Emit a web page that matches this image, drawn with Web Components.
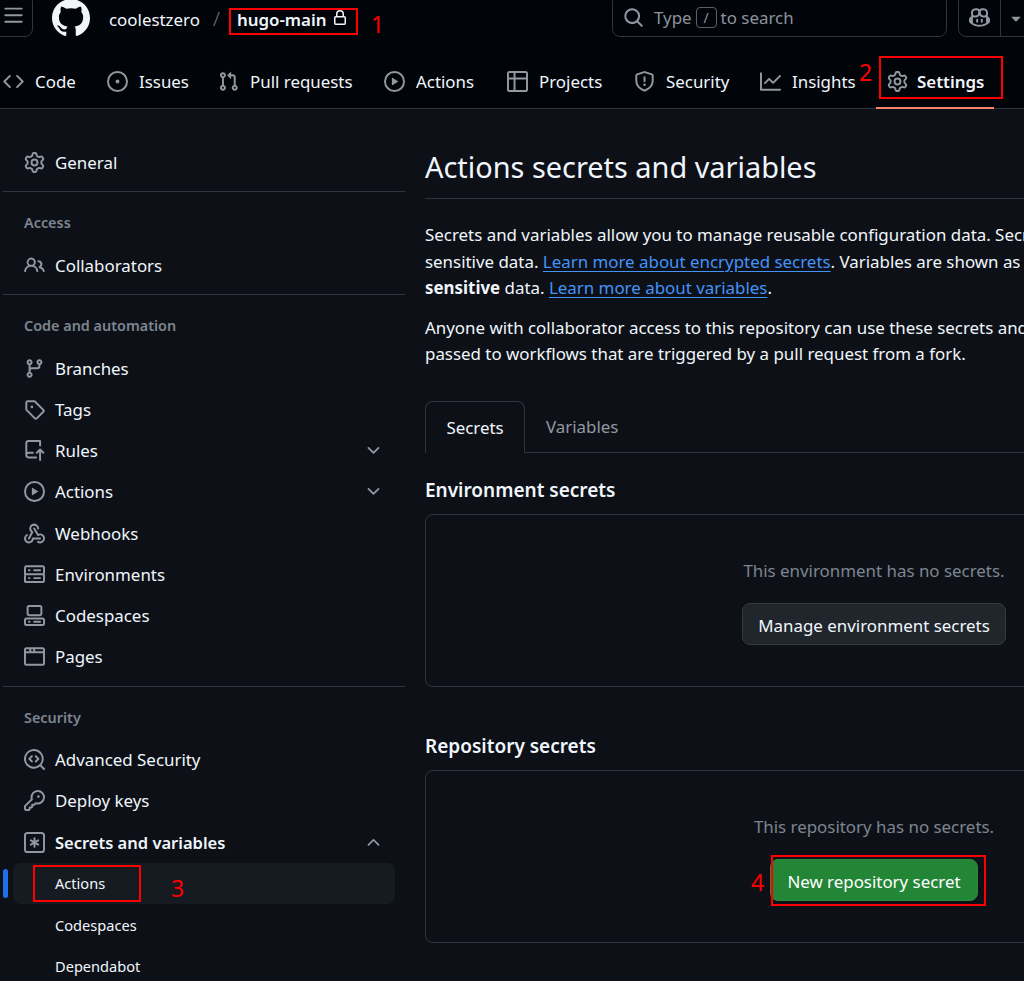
<!DOCTYPE html>
<html lang="en">

<head>
  <meta charset="UTF-8">
  <title>Actions secrets and variables</title>
  <style>
    html,
    body {
      margin: 0;
      height: 100%;
      overflow: hidden;
      background-color: #0d1117;
      color: #f0f6fc;
      font-family: "Noto Sans", "Liberation Sans", sans-serif;
      font-size: 16.9px;
    }

    body {
      position: relative;
    }

    /* 定义前隐藏组件 */
    :not(:defined) {
      display: none;
    }
  </style>
</head>

<body>
  <gh-header>
    <top-bar owner="coolestzero" repo="hugo-main"></top-bar>
    <repo-nav>
      <nav-tab icon="code" style="--w:41px">Code</nav-tab>
      <nav-tab icon="issue" style="--w:48px">Issues</nav-tab>
      <nav-tab icon="pr" style="--w:103px">Pull requests</nav-tab>
      <nav-tab icon="play" style="--w:60px">Actions</nav-tab>
      <nav-tab icon="table" style="--w:64px">Projects</nav-tab>
      <nav-tab icon="shield" style="--w:63px">Security</nav-tab>
      <nav-tab icon="graph" style="--w:64px">Insights</nav-tab>
      <nav-tab icon="gear" style="--w:68px" selected>Settings</nav-tab>
    </repo-nav>
  </gh-header>

  <settings-layout>
    <settings-side slot="side">
      <side-item icon="gear">General</side-item>
      <side-group label="Access">
        <side-item icon="people">Collaborators</side-item>
      </side-group>
      <side-group label="Code and automation">
        <side-item icon="branch">Branches</side-item>
        <side-item icon="tag">Tags</side-item>
        <side-item icon="rules" chevron="down">Rules</side-item>
        <side-item icon="play" chevron="down">Actions</side-item>
        <side-item icon="webhook">Webhooks</side-item>
        <side-item icon="server">Environments</side-item>
        <side-item icon="codespaces">Codespaces</side-item>
        <side-item icon="browser">Pages</side-item>
      </side-group>
      <side-group label="Security" last>
        <side-item icon="codescan">Advanced Security</side-item>
        <side-item icon="key">Deploy keys</side-item>
        <side-item icon="asterisk" chevron="up" strong>Secrets and variables</side-item>
        <side-item sub current>Actions</side-item>
        <side-item sub>Codespaces</side-item>
        <side-item sub>Dependabot</side-item>
      </side-group>
    </settings-side>

    <secrets-page>
      <secret-box title-text="Environment secrets" empty="This environment has no secrets.">
        <action-button>Manage environment secrets</action-button>
      </secret-box>
      <secret-box title-text="Repository secrets" empty="This repository has no secrets.">
        <action-button primary>New repository secret</action-button>
      </secret-box>
    </secrets-page>
  </settings-layout>

  <!-- 红色标注 -->
  <red-mark num="1" style="left:229px;top:8px;width:129px;height:27px;--nx:140px;--ny:0px"></red-mark>
  <red-mark num="2" style="left:879px;top:56px;width:124px;height:43px;--nx:-22px;--ny:0px"></red-mark>
  <red-mark num="3" style="left:33px;top:865px;width:108px;height:37px;--nx:136px;--ny:7px"></red-mark>
  <red-mark num="4" style="left:771px;top:855px;width:215px;height:51px;--nx:-22px;--ny:11px"></red-mark>

  <script>
    (function () {
      const ICONS = {
        bars: 'M1 2.75A.75.75 0 0 1 1.75 2h12.5a.75.75 0 0 1 0 1.5H1.75A.75.75 0 0 1 1 2.75Zm0 5A.75.75 0 0 1 1.75 7h12.5a.75.75 0 0 1 0 1.5H1.75A.75.75 0 0 1 1 7.75ZM1.75 12h12.5a.75.75 0 0 1 0 1.5H1.75a.75.75 0 0 1 0-1.5Z',
        github: 'M8 0c4.42 0 8 3.58 8 8a8.013 8.013 0 0 1-5.45 7.59c-.4.08-.55-.17-.55-.38 0-.27.01-1.13.01-2.2 0-.75-.25-1.23-.54-1.48 1.78-.2 3.65-.88 3.65-3.95 0-.88-.31-1.59-.82-2.15.08-.2.36-1.02-.08-2.12 0 0-.67-.22-2.2.82-.64-.18-1.32-.27-2-.27-.68 0-1.36.09-2 .27-1.53-1.03-2.2-.82-2.2-.82-.44 1.1-.16 1.92-.08 2.12-.51.56-.82 1.28-.82 2.15 0 3.06 1.86 3.75 3.64 3.95-.23.2-.44.55-.51 1.07-.46.21-1.61.55-2.33-.66-.15-.24-.6-.83-1.23-.82-.67.01-.27.38.01.53.34.19.73.9.82 1.13.16.45.68 1.31 2.69.94 0 .67.01 1.3.01 1.49 0 .21-.15.45-.55.38A7.995 7.995 0 0 1 0 8c0-4.42 3.58-8 8-8Z',
        lock: 'M4 4a4 4 0 0 1 8 0v2h.25c.966 0 1.75.784 1.75 1.75v5.5A1.75 1.75 0 0 1 12.25 15h-8.5A1.75 1.75 0 0 1 2 13.25v-5.5C2 6.784 2.784 6 3.75 6H4Zm8.25 3.5h-8.5a.25.25 0 0 0-.25.25v5.5c0 .138.112.25.25.25h8.5a.25.25 0 0 0 .25-.25v-5.5a.25.25 0 0 0-.25-.25ZM10.5 6V4a2.5 2.5 0 1 0-5 0v2Z',
        search: 'M10.68 11.74a6 6 0 0 1-7.922-8.982 6 6 0 0 1 8.982 7.922l3.04 3.04a.749.749 0 0 1-.326 1.275.749.749 0 0 1-.734-.215ZM11.5 7a4.499 4.499 0 1 0-8.997 0A4.499 4.499 0 0 0 11.5 7Z',
        copilot: 'M7.998 15.035c-4.562 0-7.873-2.914-7.998-3.749V9.338c.085-.628.677-1.686 1.588-2.065.013-.07.024-.143.036-.218.029-.183.06-.384.126-.612-.201-.508-.254-1.084-.254-1.656 0-.87.128-1.769.693-2.484.579-.733 1.494-1.124 2.724-1.261 1.206-.134 2.262.034 2.944.765.05.053.096.108.139.165.044-.057.094-.112.143-.165.682-.731 1.738-.899 2.944-.765 1.23.137 2.145.528 2.724 1.261.566.715.693 1.614.693 2.484 0 .572-.053 1.148-.254 1.656.066.228.098.429.126.612.012.076.024.148.037.218.924.385 1.522 1.471 1.591 2.095v1.872c0 .766-3.351 3.795-8.002 3.795Zm0-1.485c2.28 0 4.584-1.11 5.002-1.433V7.862l-.023-.116c-.49.21-1.075.291-1.727.291-1.146 0-2.059-.327-2.71-.991A3.222 3.222 0 0 1 8 6.303a3.24 3.24 0 0 1-.544.743c-.65.664-1.563.991-2.71.991-.652 0-1.236-.081-1.727-.291l-.023.116v4.255c.419.323 2.722 1.433 5.002 1.433ZM6.762 2.83c-.193-.206-.637-.413-1.682-.297-1.019.113-1.479.404-1.713.7-.247.312-.369.789-.369 1.554 0 .793.129 1.171.308 1.371.162.181.519.379 1.442.379.853 0 1.339-.235 1.638-.54.315-.322.527-.827.617-1.553.117-.935-.037-1.395-.241-1.614Zm4.155-.297c-1.044-.116-1.488.091-1.681.297-.204.219-.359.679-.242 1.614.091.726.303 1.231.618 1.553.299.305.784.54 1.638.54.922 0 1.28-.198 1.442-.379.179-.2.308-.578.308-1.371 0-.765-.123-1.242-.37-1.554-.233-.296-.693-.587-1.713-.7ZM6.25 9.037a.75.75 0 0 1 .75.75v1.501a.75.75 0 0 1-1.5 0V9.787a.75.75 0 0 1 .75-.75Zm4.25.75v1.501a.75.75 0 0 1-1.5 0V9.787a.75.75 0 0 1 1.5 0Z',
        code: 'm11.28 3.22 4.25 4.25a.75.75 0 0 1 0 1.06l-4.25 4.25a.749.749 0 0 1-1.275-.326.749.749 0 0 1 .215-.734L13.94 8l-3.72-3.72a.749.749 0 0 1 .326-1.275.749.749 0 0 1 .734.215Zm-6.56 0a.751.751 0 0 1 1.042.018.751.751 0 0 1 .018 1.042L2.06 8l3.72 3.72a.749.749 0 0 1-.326 1.275.749.749 0 0 1-.734-.215L.47 8.53a.75.75 0 0 1 0-1.06Z',
        issue: 'M8 9.5a1.5 1.5 0 1 0 0-3 1.5 1.5 0 0 0 0 3ZM8 0a8 8 0 1 1 0 16A8 8 0 0 1 8 0ZM1.5 8a6.5 6.5 0 1 0 13 0 6.5 6.5 0 0 0-13 0Z',
        pr: 'M1.5 3.25a2.25 2.25 0 1 1 3 2.122v5.256a2.251 2.251 0 1 1-1.5 0V5.372A2.25 2.25 0 0 1 1.5 3.25Zm5.677-.177L9.573.677A.25.25 0 0 1 10 .854V2.5h1A2.5 2.5 0 0 1 13.5 5v5.628a2.251 2.251 0 1 1-1.5 0V5a1 1 0 0 0-1-1h-1v1.646a.25.25 0 0 1-.427.177L7.177 3.427a.25.25 0 0 1 0-.354ZM3.75 2.5a.75.75 0 1 0 0 1.5.75.75 0 0 0 0-1.5Zm0 9.5a.75.75 0 1 0 0 1.5.75.75 0 0 0 0-1.5Zm8.25.75a.75.75 0 1 0 1.5 0 .75.75 0 0 0-1.5 0Z',
        play: 'M8 0a8 8 0 1 1 0 16A8 8 0 0 1 8 0ZM1.5 8a6.5 6.5 0 1 0 13 0 6.5 6.5 0 0 0-13 0Zm4.879-2.773 4.264 2.559a.25.25 0 0 1 0 .428l-4.264 2.559A.25.25 0 0 1 6 10.559V5.442a.25.25 0 0 1 .379-.215Z',
        table: 'M0 1.75C0 .784.784 0 1.75 0h12.5C15.216 0 16 .784 16 1.75v12.5A1.75 1.75 0 0 1 14.25 16H1.75A1.75 1.75 0 0 1 0 14.25ZM6.5 6.5v8h7.75a.25.25 0 0 0 .25-.25V6.5Zm8-1.5V1.75a.25.25 0 0 0-.25-.25H6.5V5Zm-13 1.5v7.75c0 .138.112.25.25.25H5v-8ZM5 5V1.5H1.75a.25.25 0 0 0-.25.25V5Z',
        shield: 'M7.467.133a1.748 1.748 0 0 1 1.066 0l5.25 1.68A1.75 1.75 0 0 1 15 3.48V7c0 1.566-.32 3.182-1.303 4.682-.983 1.498-2.585 2.813-5.032 3.855a1.697 1.697 0 0 1-1.33 0c-2.447-1.042-4.049-2.357-5.032-3.855C1.32 10.182 1 8.566 1 7V3.48a1.75 1.75 0 0 1 1.217-1.667Zm.61 1.429a.25.25 0 0 0-.153 0l-5.25 1.68a.25.25 0 0 0-.174.238V7c0 1.358.275 2.666 1.057 3.86.784 1.194 2.121 2.34 4.366 3.297a.196.196 0 0 0 .154 0c2.245-.956 3.582-2.104 4.366-3.298C13.225 9.666 13.5 8.36 13.5 7V3.48a.251.251 0 0 0-.174-.237l-5.25-1.68ZM8.75 4.75v3a.75.75 0 0 1-1.5 0v-3a.75.75 0 0 1 1.5 0ZM9 10.5a1 1 0 1 1-2 0 1 1 0 0 1 2 0Z',
        graph: 'M1.5 1.75V13.5h13.75a.75.75 0 0 1 0 1.5H.75a.75.75 0 0 1-.75-.75V1.75a.75.75 0 0 1 1.5 0Zm14.28 2.53-5.25 5.25a.75.75 0 0 1-1.06 0L7 7.06 4.28 9.78a.751.751 0 0 1-1.042-.018.751.751 0 0 1-.018-1.042l3.25-3.25a.75.75 0 0 1 1.06 0L10 7.94l4.72-4.72a.751.751 0 0 1 1.042.018.751.751 0 0 1 .018 1.042Z',
        gear: 'M8 0a8.2 8.2 0 0 1 .701.031C9.444.095 9.99.645 10.16 1.29l.288 1.107c.018.066.079.158.212.224.231.114.454.243.668.386.123.082.233.09.299.071l1.103-.303c.644-.176 1.392.021 1.82.63.27.385.506.792.704 1.218.315.675.111 1.422-.364 1.891l-.814.806c-.049.048-.098.147-.088.294.016.257.016.515 0 .772-.01.147.038.246.088.294l.814.806c.475.469.679 1.216.364 1.891a7.977 7.977 0 0 1-.704 1.217c-.428.61-1.176.807-1.82.63l-1.102-.302c-.067-.019-.177-.011-.3.071a5.909 5.909 0 0 1-.668.386c-.133.066-.194.158-.211.224l-.29 1.106c-.168.646-.715 1.196-1.458 1.26a8.006 8.006 0 0 1-1.402 0c-.743-.064-1.289-.614-1.458-1.26l-.289-1.106c-.018-.066-.079-.158-.212-.224a5.738 5.738 0 0 1-.668-.386c-.123-.082-.233-.09-.299-.071l-1.103.303c-.644.176-1.392-.021-1.82-.63a8.12 8.12 0 0 1-.704-1.218c-.315-.675-.111-1.422.363-1.891l.815-.806c.05-.048.098-.147.088-.294a6.214 6.214 0 0 1 0-.772c.01-.147-.038-.246-.088-.294l-.815-.806C.635 6.045.431 5.298.746 4.623a7.92 7.92 0 0 1 .704-1.217c.428-.61 1.176-.807 1.82-.63l1.102.302c.067.019.177.011.3-.071.214-.143.437-.272.668-.386.133-.066.194-.158.211-.224l.29-1.106C6.009.645 6.556.095 7.299.03 7.53.01 7.764 0 8 0Zm-.571 1.525c-.036.003-.108.036-.137.146l-.289 1.105c-.147.561-.549.967-.998 1.189-.173.086-.34.183-.5.29-.417.278-.97.423-1.529.27l-1.103-.303c-.109-.03-.175.016-.195.045-.22.312-.412.644-.573.99-.014.031-.021.11.059.19l.815.806c.411.406.562.957.53 1.456a4.709 4.709 0 0 0 0 .582c.032.499-.119 1.05-.53 1.456l-.815.806c-.081.08-.073.159-.059.19.162.346.353.677.573.989.02.03.085.076.195.046l1.102-.303c.56-.153 1.113-.008 1.53.27.161.107.328.204.501.29.447.222.85.629.997 1.189l.289 1.105c.029.109.101.143.137.146a6.6 6.6 0 0 0 1.142 0c.036-.003.108-.036.137-.146l.289-1.105c.147-.561.549-.967.998-1.189.173-.086.34-.183.5-.29.417-.278.97-.423 1.529-.27l1.103.303c.109.029.175-.016.195-.045.22-.313.411-.644.573-.99.014-.031.021-.11-.059-.19l-.815-.806c-.411-.406-.562-.957-.53-1.456a4.709 4.709 0 0 0 0-.582c-.032-.499.119-1.05.53-1.456l.815-.806c.081-.08.073-.159.059-.19a6.464 6.464 0 0 0-.573-.989c-.02-.03-.085-.076-.195-.046l-1.102.303c-.56.153-1.113.008-1.53-.27a4.44 4.44 0 0 0-.501-.29c-.447-.222-.85-.629-.997-1.189l-.289-1.105c-.029-.11-.101-.143-.137-.146a6.6 6.6 0 0 0-1.142 0ZM11 8a3 3 0 1 1-6 0 3 3 0 0 1 6 0ZM9.5 8a1.5 1.5 0 1 0-3.001.001A1.5 1.5 0 0 0 9.5 8Z',
        people: 'M2 5.5a3.5 3.5 0 1 1 5.898 2.549 5.508 5.508 0 0 1 3.034 4.084.75.75 0 1 1-1.482.235 4 4 0 0 0-7.9 0 .75.75 0 0 1-1.482-.236A5.507 5.507 0 0 1 3.102 8.05 3.493 3.493 0 0 1 2 5.5ZM11 4a3.001 3.001 0 0 1 2.22 5.018 5.01 5.01 0 0 1 2.56 3.012.749.749 0 0 1-.885.954.752.752 0 0 1-.549-.514 3.507 3.507 0 0 0-2.522-2.372.75.75 0 0 1-.574-.73v-.352a.75.75 0 0 1 .416-.672A1.5 1.5 0 0 0 11 5.5.75.75 0 0 1 11 4Zm-5.5-.5a2 2 0 1 0-.001 3.999A2 2 0 0 0 5.5 3.5Z',
        branch: 'M9.5 3.25a2.25 2.25 0 1 1 3 2.122V6A2.5 2.5 0 0 1 10 8.5H6a1 1 0 0 0-1 1v1.128a2.251 2.251 0 1 1-1.5 0V5.372a2.25 2.25 0 1 1 1.5 0v1.836A2.493 2.493 0 0 1 6 7h4a1 1 0 0 0 1-1v-.628A2.25 2.25 0 0 1 9.5 3.25Zm-6 0a.75.75 0 1 0 1.5 0 .75.75 0 0 0-1.5 0Zm8.25-.75a.75.75 0 1 0 0 1.5.75.75 0 0 0 0-1.5ZM4.25 12a.75.75 0 1 0 0 1.5.75.75 0 0 0 0-1.5Z',
        tag: 'M1 7.775V2.75C1 1.784 1.784 1 2.75 1h5.025c.464 0 .91.184 1.238.513l6.25 6.25a1.75 1.75 0 0 1 0 2.474l-5.026 5.026a1.75 1.75 0 0 1-2.474 0l-6.25-6.25A1.752 1.752 0 0 1 1 7.775Zm1.5 0c0 .066.026.13.073.177l6.25 6.25a.25.25 0 0 0 .354 0l5.025-5.025a.25.25 0 0 0 0-.354l-6.25-6.25a.25.25 0 0 0-.177-.073H2.75a.25.25 0 0 0-.25.25ZM6 5a1 1 0 1 1 0 2 1 1 0 0 1 0-2Z',
        rules: 'M1 2.5A2.5 2.5 0 0 1 3.5 0h8.75a.75.75 0 0 1 .75.75v3.5a.75.75 0 0 1-1.5 0V1.5h-8a1 1 0 0 0-1 1v6.708A2.493 2.493 0 0 1 3.5 9h3.25a.75.75 0 0 1 0 1.5H3.5a1 1 0 0 0 0 2h5.75a.75.75 0 0 1 0 1.5H3.5A2.5 2.5 0 0 1 1 11.5Zm13.23 7.79h-.001l-1.224-1.224v6.184a.75.75 0 0 1-1.5 0V9.066L10.28 10.29a.75.75 0 0 1-1.06-1.061l2.505-2.504a.75.75 0 0 1 1.06 0L15.29 9.23a.751.751 0 0 1-.018 1.042.751.751 0 0 1-1.042.018Z',
        webhook: 'M5.5 4.25a2.25 2.25 0 0 1 4.5 0 .75.75 0 0 0 1.5 0 3.75 3.75 0 1 0-6.14 2.889l-2.272 4.258a.75.75 0 0 0 1.324.706L7 7.25a.75.75 0 0 0-.309-1.015A2.25 2.25 0 0 1 5.5 4.25ZM7.364 3.607a.75.75 0 0 1 1.03.257l2.608 4.349a3.75 3.75 0 1 1-.628 6.785.75.75 0 0 1 .752-1.299 2.25 2.25 0 1 0-.033-3.88.75.75 0 0 1-1.03-.256L7.107 4.636a.75.75 0 0 1 .257-1.03ZM2.9 8.776A.75.75 0 0 1 2.625 9.8 2.25 2.25 0 1 0 6 11.75a.75.75 0 0 1 .75-.751h5.5a.75.75 0 0 1 0 1.5H7.425a3.751 3.751 0 1 1-5.55-3.998.75.75 0 0 1 1.024.274Z',
        server: 'M1.75 1h12.5c.966 0 1.75.784 1.75 1.75v4c0 .372-.116.717-.314 1 .198.283.314.628.314 1v4a1.75 1.75 0 0 1-1.75 1.75H1.75A1.75 1.75 0 0 1 0 13.75v-4c0-.372.116-.717.314-1a1.739 1.739 0 0 1-.314-1v-4C0 1.784.784 1 1.75 1ZM1.5 2.75v4c0 .138.112.25.25.25h12.5a.25.25 0 0 0 .25-.25v-4a.25.25 0 0 0-.25-.25H1.75a.25.25 0 0 0-.25.25Zm.25 5.75a.25.25 0 0 0-.25.25v4c0 .138.112.25.25.25h12.5a.25.25 0 0 0 .25-.25v-4a.25.25 0 0 0-.25-.25ZM7 4.75A.75.75 0 0 1 7.75 4h4.5a.75.75 0 0 1 0 1.5h-4.5A.75.75 0 0 1 7 4.75ZM7.75 10h4.5a.75.75 0 0 1 0 1.5h-4.5a.75.75 0 0 1 0-1.5ZM3 4.75A.75.75 0 0 1 3.75 4h.5a.75.75 0 0 1 0 1.5h-.5A.75.75 0 0 1 3 4.75ZM3.75 10h.5a.75.75 0 0 1 0 1.5h-.5a.75.75 0 0 1 0-1.5Z',
        codespaces: 'M0 11.25c0-.966.784-1.75 1.75-1.75h12.5c.966 0 1.75.784 1.75 1.75v3A1.75 1.75 0 0 1 14.25 16H1.75A1.75 1.75 0 0 1 0 14.25Zm2-9.5C2 .784 2.784 0 3.75 0h8.5C13.216 0 14 .784 14 1.75v5a1.75 1.75 0 0 1-1.75 1.75h-8.5A1.75 1.75 0 0 1 2 6.75Zm1.75-.25a.25.25 0 0 0-.25.25v5c0 .138.112.25.25.25h8.5a.25.25 0 0 0 .25-.25v-5a.25.25 0 0 0-.25-.25Zm-2 9.5a.25.25 0 0 0-.25.25v3c0 .138.112.25.25.25h12.5a.25.25 0 0 0 .25-.25v-3a.25.25 0 0 0-.25-.25ZM7 12.75a.75.75 0 0 1 .75-.75h4.5a.75.75 0 0 1 0 1.5h-4.5a.75.75 0 0 1-.75-.75Zm-4 0a.75.75 0 0 1 .75-.75h.5a.75.75 0 0 1 0 1.5h-.5a.75.75 0 0 1-.75-.75Z',
        browser: 'M0 2.75C0 1.784.784 1 1.75 1h12.5c.966 0 1.75.784 1.75 1.75v10.5A1.75 1.75 0 0 1 14.25 15H1.75A1.75 1.75 0 0 1 0 13.25ZM14.5 5.5h-13v7.75c0 .138.112.25.25.25h12.5a.25.25 0 0 0 .25-.25ZM14.5 4V2.75a.25.25 0 0 0-.25-.25H8.5V4Zm-7.5 0V2.5H5.5V4ZM4 4V2.5H1.75a.25.25 0 0 0-.25.25V4Z',
        codescan: 'M8.47 4.97a.75.75 0 0 0 0 1.06L9.94 7.5 8.47 8.97a.75.75 0 1 0 1.06 1.06l2-2a.75.75 0 0 0 0-1.06l-2-2a.75.75 0 0 0-1.06 0ZM6.53 6.03a.75.75 0 0 0-1.06-1.06l-2 2a.75.75 0 0 0 0 1.06l2 2a.75.75 0 1 0 1.06-1.06L5.06 7.5l1.47-1.47ZM12.246 13.307a7.501 7.501 0 1 1 1.06-1.06l2.474 2.473a.749.749 0 0 1-.326 1.275.749.749 0 0 1-.734-.215ZM1.5 7.5a6.002 6.002 0 0 0 3.608 5.504 6.002 6.002 0 0 0 6.486-1.117.748.748 0 0 1 .292-.293A6 6 0 1 0 1.5 7.5Z',
        key: 'M10.5 0a5.499 5.499 0 1 1-1.288 10.848l-.932.932a.749.749 0 0 1-.53.22H7v.75a.749.749 0 0 1-.22.53l-.5.5a.749.749 0 0 1-.53.22H5v.75a.749.749 0 0 1-.22.53l-.5.5a.749.749 0 0 1-.53.22h-2A1.75 1.75 0 0 1 0 14.25v-2c0-.199.079-.389.22-.53l4.932-4.932A5.5 5.5 0 0 1 10.5 0Zm-4 5.5c-.001.431.069.86.205 1.269a.75.75 0 0 1-.181.768L1.5 12.56v1.69c0 .138.112.25.25.25h1.69l.06-.06v-1.19a.75.75 0 0 1 .75-.75h1.19l.06-.06v-1.19a.75.75 0 0 1 .75-.75h1.19l1.023-1.025a.75.75 0 0 1 .768-.18A4 4 0 1 0 6.5 5.5ZM11 6a1 1 0 1 1 0-2 1 1 0 0 1 0 2Z',
        asterisk: 'M0 2.75A2.75 2.75 0 0 1 2.75 0h10.5A2.75 2.75 0 0 1 16 2.75v10.5A2.75 2.75 0 0 1 13.25 16H2.75A2.75 2.75 0 0 1 0 13.25ZM2.75 1.5c-.69 0-1.25.56-1.25 1.25v10.5c0 .69.56 1.25 1.25 1.25h10.5c.69 0 1.25-.56 1.25-1.25V2.75c0-.69-.56-1.25-1.25-1.25ZM8 4a.75.75 0 0 1 .75.75V6.7l1.69-.975a.75.75 0 0 1 .75 1.3L9.5 8l1.69.976a.75.75 0 0 1-.75 1.298L8.75 9.3v1.951a.75.75 0 0 1-1.5 0V9.299l-1.69.976a.75.75 0 0 1-.75-1.3L6.5 8l-1.69-.975a.75.75 0 0 1 .75-1.3l1.69.976V4.75A.75.75 0 0 1 8 4Z',
        down: 'M12.78 5.22a.749.749 0 0 1 0 1.06l-4.25 4.25a.749.749 0 0 1-1.06 0L3.22 6.28a.749.749 0 1 1 1.06-1.06L8 8.939l3.72-3.719a.749.749 0 0 1 1.06 0Z',
        up: 'M3.22 10.53a.749.749 0 0 1 0-1.06l4.25-4.25a.749.749 0 0 1 1.06 0l4.25 4.25a.749.749 0 1 1-1.06 1.06L8 6.811 4.28 10.53a.749.749 0 0 1-1.06 0Z',
        caret: 'm4.427 7.427 3.396 3.396a.25.25 0 0 0 .354 0l3.396-3.396A.25.25 0 0 0 11.396 7H4.604a.25.25 0 0 0-.177.427Z'
      }

      // 所有组件共用的写法：把 markup 放进 shadow root
      class Base extends HTMLElement {
        constructor() {
          super()
          this.attachShadow({ mode: 'open' })
        }
        connectedCallback() {
          this.shadowRoot.innerHTML = this.render()
        }
      }

      class OctoIcon extends Base {
        render() {
          const size = this.getAttribute('size') || 21
          return `<style>
            :host { display: inline-flex; flex: none; color: var(--icon, #9198a1); }
            svg { display: block; fill: currentColor; }
          </style>
          <svg viewBox="0 0 16 16" width="${size}" height="${size}"><path fill-rule="evenodd" d="${ICONS[this.getAttribute('name')]}"></path></svg>`
        }
      }

      class GhHeader extends Base {
        render() {
          return `<style>
            :host {
              display: flow-root;
              height: 108px;
              background-color: #010409;
              border-bottom: 1px solid #30363d;
            }
          </style><slot></slot>`
        }
      }

      class TopBar extends Base {
        render() {
          return `<style>
            :host {
              display: flex;
              align-items: center;
              height: 43px;
              margin-top: -6px;
              color: #f0f6fc;
            }
            .burger {
              display: flex;
              align-items: center;
              justify-content: center;
              box-sizing: border-box;
              width: 43px;
              height: 43px;
              margin-left: -10px;
              border: 1px solid #30363d;
              border-radius: 8px;
              --icon: #9198a1;
            }
            .burger octo-icon { margin-left: 4px; }
            .logo { margin-left: 19px; --icon: #f0f6fc; position: relative; top: 2px; }
            .owner { margin-left: 19px; position: relative; top: 4px; }
            .sep { margin-left: 13px; color: #6e7681; font-size: 20px; position: relative; top: 3px; font-weight: 300; }
            .repo { margin-left: 17px; font-weight: 600; position: relative; top: 4px; }
            .lock { margin-left: 5px; --icon: #f0f6fc; position: relative; top: 2px; }
            .search {
              display: flex;
              align-items: center;
              gap: 10px;
              box-sizing: border-box;
              width: 335px;
              height: 43px;
              margin-left: auto;
              padding: 4px 10px 0;
              border: 1px solid #30363d;
              border-radius: 8px;
              color: #8b949e;
            }
            .search span { display: flex; align-items: center; gap: 4px; }
            kbd {
              display: inline-flex;
              align-items: center;
              justify-content: center;
              box-sizing: border-box;
              width: 21px;
              height: 21px;
              border: 1px solid #5a626c;
              border-radius: 4px;
              font: inherit;
              font-size: 14px;
            }
            .copilot {
              display: flex;
              align-items: center;
              box-sizing: border-box;
              width: 80px;
              height: 43px;
              margin: 0 -14px 0 11px;
              border: 1px solid #30363d;
              border-radius: 8px;
              flex: none;
            }
            .copilot .c { display: flex; justify-content: center; align-items: center; box-sizing: border-box; width: 42px; height: 100%; padding-top: 4px; border-right: 1px solid #30363d; }
            .copilot .d { margin: 4px 0 0 5px; }
          </style>
          <div class="burger"><octo-icon name="bars"></octo-icon></div>
          <octo-icon class="logo" name="github" size="38"></octo-icon>
          <span class="owner">${this.getAttribute('owner')}</span>
          <span class="sep">/</span>
          <span class="repo">${this.getAttribute('repo')}</span>
          <octo-icon class="lock" name="lock" size="16"></octo-icon>
          <div class="search"><octo-icon name="search"></octo-icon><span>Type <kbd>/</kbd> to search</span></div>
          <div class="copilot"><div class="c"><octo-icon name="copilot"></octo-icon></div><octo-icon class="d" name="caret" size="20"></octo-icon></div>`
        }
      }

      class RepoNav extends Base {
        render() {
          return `<style>
            :host {
              display: flex;
              align-items: stretch;
              gap: 9px;
              height: 71px;
              box-sizing: border-box;
              padding: 0 0 0 3px;
            }
          </style><slot></slot>`
        }
      }

      class NavTab extends Base {
        render() {
          const selected = this.hasAttribute('selected')
          return `<style>
            :host {
              display: flex;
              align-items: center;
              gap: 11px;
              padding: 17px 11px 0 0;
              box-sizing: border-box;
              height: 71px;
              margin-right: 11px;
              white-space: nowrap;
              font-weight: ${selected ? 600 : 400};
            }
            :host([selected]) {
              gap: 9px;
              box-shadow: inset 0 -1px 0 #f78166, 0 1px 0 #f78166;
              margin-left: -11px;
              padding-left: 11px;
              padding-right: 9px;
              margin-right: 0;
            }
            .t { display: block; width: var(--w); }
          </style>
          <octo-icon name="${this.getAttribute('icon')}"></octo-icon><span class="t"><slot></slot></span>`
        }
      }

      class SettingsLayout extends Base {
        render() {
          return `<style>
            :host {
              display: flex;
              align-items: flex-start;
              gap: 20px;
              padding: 33px 0 0 3px;
              width: 1321px;
            }
            .side { width: 402px; flex: none; }
            .main { width: 898px; flex: none; }
          </style>
          <div class="side"><slot name="side"></slot></div>
          <div class="main"><slot></slot></div>`
        }
      }

      class SettingsSide extends Base {
        render() {
          return `<style>:host { display: block; }</style><slot></slot>`
        }
      }

      class SideGroup extends Base {
        render() {
          return `<style>
            :host {
              display: block;
              margin-top: 8px;
              border-top: 1px solid #30363d;
            }
            h3 {
              box-sizing: border-box;
              height: 52.5px;
              margin: 0;
              padding: 21px 0 0 21px;
              color: #7d8590;
              font-size: 14.4px;
              line-height: 20px;
              font-weight: 600;
            }
          </style>
          <h3>${this.getAttribute('label')}</h3><slot></slot>`
        }
      }

      class SideItem extends Base {
        render() {
          const icon = this.getAttribute('icon')
          const chevron = this.getAttribute('chevron')
          return `<style>
            :host {
              position: relative;
              display: flex;
              align-items: center;
              gap: 10px;
              box-sizing: border-box;
              height: 41.25px;
              margin: 0 10px;
              padding: 0 12px 0 11px;
              border-radius: 8px;
            }
            :host([strong]) { font-weight: 600; font-size: 16.5px; }
            :host([sub]) { padding-left: 42px; font-size: 14.6px; }
            :host([current]) { background-color: #161b22; }
            :host([current])::before {
              content: '';
              position: absolute;
              left: -10px;
              top: 6px;
              bottom: 6px;
              width: 5px;
              border-radius: 3px;
              background-color: #1f6feb;
            }
            .chev { margin-left: auto; }
          </style>
          ${icon ? `<octo-icon name="${icon}"></octo-icon>` : ''}
          <span><slot></slot></span>
          ${chevron ? `<octo-icon class="chev" name="${chevron}" size="19"></octo-icon>` : ''}`
        }
      }

      class SecretsPage extends Base {
        render() {
          return `<style>
            :host { display: block; }
            h1 {
              margin: 0;
              height: 56px;
              border-bottom: 1px solid #30363d;
              font-size: 28.9px;
              line-height: 50px;
              font-weight: 400;
            }
            p {
              margin: 23px 0 0;
              line-height: 26.6px;
              white-space: nowrap;
            }
            p + p { margin-top: 13px; }
            a { color: #4493f8; text-decoration: underline; text-underline-offset: 3px; }
            .tabs { display: flex; margin-top: 33px; height: 52px; box-sizing: border-box; border-bottom: 1px solid #30363d; }
            .tab {
              box-sizing: border-box;
              display: flex;
              align-items: center;
              justify-content: center;
              height: 52px;
              padding: 0 21px;
              color: #9198a1;
            }
            .tab.on {
              width: 100px;
              color: #f0f6fc;
              background-color: #0d1117;
              border: 1px solid #30363d;
              border-bottom: 0;
              border-radius: 8px 8px 0 0;
            }
          </style>
          <h1>Actions secrets and variables</h1>
          <p>Secrets and variables allow you to manage reusable configuration data. Secrets are encrypted and are used for<br>sensitive data. <a>Learn more about encrypted secrets</a>. Variables are shown as plain text and are used for <b>non-</b><br><b>sensitive</b> data. <a>Learn more about variables</a>.</p>
          <p>Anyone with collaborator access to this repository can use these secrets and variables for actions. They are not<br>passed to workflows that are triggered by a pull request from a fork.</p>
          <div class="tabs"><div class="tab on">Secrets</div><div class="tab">Variables</div></div>
          <slot></slot>`
        }
      }

      class SecretBox extends Base {
        render() {
          return `<style>
            :host { display: block; margin-bottom: 22px; }
            h2 { margin: 0; height: 61px; box-sizing: border-box; padding-top: 24px; font-size: 19px; line-height: 26px; font-weight: 600; }
            .box {
              display: flex;
              flex-direction: column;
              align-items: center;
              gap: 20px;
              box-sizing: border-box;
              height: 173px;
              padding-top: 44px;
              border: 1px solid #30363d;
              border-radius: 8px;
            }
            .empty { color: #7d8590; line-height: 24px; }
          </style>
          <h2>${this.getAttribute('title-text')}</h2>
          <div class="box"><div class="empty">${this.getAttribute('empty')}</div><slot></slot></div>`
        }
      }

      class ActionButton extends Base {
        render() {
          return `<style>
            :host {
              display: flex;
              align-items: center;
              box-sizing: border-box;
              height: 42px;
              padding: 3px 15px 0;
              background-color: #21262d;
              border: 1px solid #363b42;
              border-radius: 8px;
              white-space: nowrap;
            }
            :host([primary]) {
              padding: 3px 16px 0;
              background-color: #238636;
              border-color: #2b8a3e;
              color: #fff;
            }
          </style><slot></slot>`
        }
      }

      class RedMark extends Base {
        render() {
          return `<style>
            :host {
              position: absolute;
              box-sizing: border-box;
              border: 2px solid #f00;
            }
            span {
              position: absolute;
              left: var(--nx);
              top: var(--ny);
              color: #f00;
              font-size: 23px;
              line-height: 28px;
            }
          </style><span>${this.getAttribute('num')}</span>`
        }
      }

      customElements.define('octo-icon', OctoIcon)
      customElements.define('gh-header', GhHeader)
      customElements.define('top-bar', TopBar)
      customElements.define('repo-nav', RepoNav)
      customElements.define('nav-tab', NavTab)
      customElements.define('settings-layout', SettingsLayout)
      customElements.define('settings-side', SettingsSide)
      customElements.define('side-group', SideGroup)
      customElements.define('side-item', SideItem)
      customElements.define('secrets-page', SecretsPage)
      customElements.define('secret-box', SecretBox)
      customElements.define('action-button', ActionButton)
      customElements.define('red-mark', RedMark)
    })()
  </script>
</body>

</html>
